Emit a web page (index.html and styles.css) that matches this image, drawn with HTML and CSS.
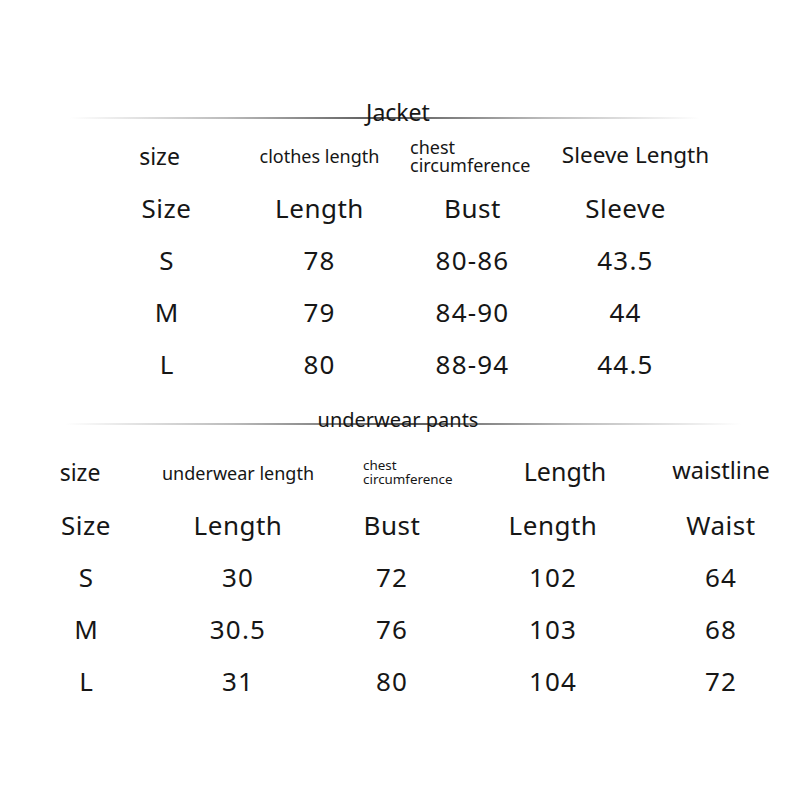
FILE: index.html
```html
<!DOCTYPE html>
<html>
<head>
<meta charset="utf-8">
<link rel="stylesheet" href="styles.css">
</head>
<body>
<div class="page">
  <section class="jacket">
    <div class="divider divider-jacket"><span class="title">Jacket</span></div>
    <div class="grid grid-jacket">
      <div class="cell head h-size">size</div>
      <div class="cell head h-small">clothes length</div>
      <div class="cell head h-chest"><span>chest<br>circumference</span></div>
      <div class="cell head h-sleeve">Sleeve Length</div>

      <div class="cell word">Size</div><div class="cell word">Length</div><div class="cell word">Bust</div><div class="cell word">Sleeve</div>
      <div class="cell">S</div><div class="cell num">78</div><div class="cell num">80-86</div><div class="cell num">43.5</div>
      <div class="cell">M</div><div class="cell num">79</div><div class="cell num">84-90</div><div class="cell num">44</div>
      <div class="cell">L</div><div class="cell num">80</div><div class="cell num">88-94</div><div class="cell num">44.5</div>
    </div>
  </section>
  <section class="pants">
    <div class="divider divider-pants"><span class="title">underwear pants</span></div>
    <div class="grid grid-pants">
      <div class="cell head h-size p-size">size</div>
      <div class="cell head h-small">underwear length</div>
      <div class="cell head h-chest-small"><span>chest<br>circumference</span></div>
      <div class="cell head h-length">Length</div>
      <div class="cell head h-waist">waistline</div>

      <div class="cell word">Size</div><div class="cell word">Length</div><div class="cell word">Bust</div><div class="cell word">Length</div><div class="cell word">Waist</div>
      <div class="cell">S</div><div class="cell num">30</div><div class="cell num">72</div><div class="cell num">102</div><div class="cell num">64</div>
      <div class="cell">M</div><div class="cell num">30.5</div><div class="cell num">76</div><div class="cell num">103</div><div class="cell num">68</div>
      <div class="cell">L</div><div class="cell num">31</div><div class="cell num">80</div><div class="cell num">104</div><div class="cell num">72</div>
    </div>
  </section>
</div>
</body>
</html>
```
FILE: styles.css
```css
html, body {
  margin: 0;
  padding: 0;
  background: #ffffff;
  overflow: hidden;
}
body {
  width: 801px;
  height: 801px;
  font-family: "Noto Sans", "Open Sans", sans-serif;
  color: #161616;
}
.page {
  padding-top: 100px;
}
.divider {
  height: 24px;
  display: flex;
  justify-content: center;
  align-items: center;
  background-repeat: no-repeat;
  background-image: linear-gradient(to right, rgba(0,0,0,0), #bbbbbb 25%, #666666 46%, #555555 50%, #666666 54%, #bbbbbb 75%, rgba(0,0,0,0));
  background-size: 100% 2px;
}
.divider-jacket {
  margin: 0 101px 0 70px;
  background-position: 0 17px;
}
.divider-pants {
  margin: 18px 60px 0 65px;
  background-position: 0 15px;
}
.title {
  font-size: 23px;
  line-height: 24px;
}
.divider-jacket .title {
  margin-left: 26px;
}
.divider-pants .title {
  margin-right: 10px;
  font-size: 20px;
}
.grid {
  display: grid;
  grid-auto-rows: 52px;
}
.grid-jacket {
  margin-top: 6px;
  margin-left: 90px;
  grid-template-columns: repeat(4, 153px);
}
.grid-pants {
  margin-top: 15px;
  margin-left: 10px;
  grid-template-columns: 152px 152px 156px 166px 170px;
}
.cell {
  display: flex;
  align-items: center;
  justify-content: center;
  font-size: 26px;
  line-height: 1;
  white-space: nowrap;
}
.word {
  letter-spacing: 0.5px;
}
.num {
  letter-spacing: 1.2px;
}
.head {
  font-size: 23px;
}
.h-size {
  padding-right: 14px;
}
.p-size {
  padding-right: 12px;
  padding-bottom: 2px;
}
.h-small {
  font-size: 18px;
}
.h-chest {
  justify-content: flex-start;
  padding-left: 14px;
  font-size: 18px;
  line-height: 18px;
}
.h-sleeve {
  padding-left: 20px;
  padding-bottom: 2px;
  font-size: 22.5px;
}
.h-chest-small {
  justify-content: flex-start;
  padding-left: 49px;
  padding-bottom: 2px;
  font-size: 13.4px;
  line-height: 14px;
}
.h-length {
  font-size: 25px;
  padding-left: 24px;
  padding-bottom: 4px;
}
.h-waist {
  font-size: 23.5px;
  padding-bottom: 4px;
}
```
